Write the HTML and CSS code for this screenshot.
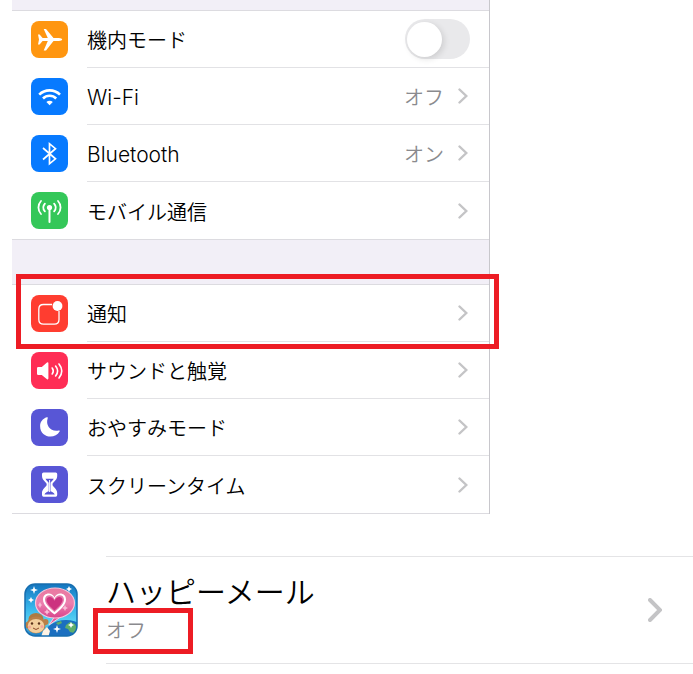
FILE: index.html
```html
<!DOCTYPE html>
<html lang="ja">
<head>
    <meta charset="UTF-8">
    <meta name="viewport" content="width=device-width, initial-scale=1.0">
    <title>設定</title>
    <link rel="stylesheet" href="styles.css">
</head>
<body>

    <!-- Settings list -->
    <div class="settings">
        <ul class="group">
            <li class="row">
                <svg class="icon orange" viewBox="0 0 37 37">
                    <path fill="#fff" d="M7 13.500h1.600l3 3.600h5.200L12.700 8h2.300l7.500 9.100h5.300c2 0 3.400.8 3.400 1.500s-1.400 1.500-3.400 1.500h-5.300L15 29.400h-2.300l4.100-9.300h-5.200l-3 3.500H7l1-5z"/>
                </svg>
                <div class="line">
                    <label class="name" for="airplane">機内モード</label>
                    <input class="toggle" type="checkbox" id="airplane">
                </div>
            </li>
            <li class="row">
                <svg class="icon blue" viewBox="0 0 37 37">
                    <g fill="none" stroke="#fff" stroke-width="2.600">
                        <path d="M8.200 16.600c5.800-5.700 15-5.700 20.800 0"/>
                        <path d="M12 20.500c3.600-3.600 9.600-3.600 13.200 0"/>
                    </g>
                    <path fill="#fff" d="M18.600 27.300l-3.200-3.300c1.800-1.700 4.600-1.700 6.400 0z"/>
                </svg>
                <a class="line" href="#">
                    <span class="name latin">Wi-Fi</span>
                    <span class="value">オフ</span>
                    <svg class="chevron" viewBox="0 0 10 16"><path d="M1.500 1.500L8.300 8l-6.800 6.500"/></svg>
                </a>
            </li>
            <li class="row">
                <svg class="icon blue" viewBox="0 0 37 37">
                    <path fill="none" stroke="#fff" stroke-width="1.700" d="M12 13l12.500 10.800-6 5V8.700l6 5L12 24.500"/>
                </svg>
                <a class="line" href="#">
                    <span class="name latin">Bluetooth</span>
                    <span class="value">オン</span>
                    <svg class="chevron" viewBox="0 0 10 16"><path d="M1.500 1.500L8.300 8l-6.800 6.500"/></svg>
                </a>
            </li>
            <li class="row">
                <svg class="icon green" viewBox="0 0 37 37">
                    <g fill="none" stroke="#fff" stroke-width="1.800" stroke-linecap="round">
                        <path d="M18.500 16v14" stroke-width="2"/>
                        <path d="M13.900 11.600c-2 2.300-2 5.500 0 7.800M23.100 11.600c2 2.300 2 5.500 0 7.800"/>
                        <path d="M10 9c-3.400 3.700-3.400 9.300 0 13M27 9c3.400 3.700 3.400 9.300 0 13"/>
                    </g>
                    <circle cx="18.500" cy="15.500" r="2.600" fill="#fff"/>
                </svg>
                <a class="line" href="#">
                    <span class="name">モバイル通信</span>
                    <svg class="chevron" viewBox="0 0 10 16"><path d="M1.500 1.500L8.300 8l-6.800 6.500"/></svg>
                </a>
            </li>
        </ul>

        <ul class="group">
            <li class="row marked">
                <svg class="icon red" viewBox="0 0 37 37">
                    <path fill="none" stroke="#fff" stroke-width="1.300" d="M21 9.500h-8.500c-3.200 0-4.700 1.500-4.700 4.700v10.300c0 3.200 1.500 4.700 4.700 4.700h10.800c3.200 0 4.700-1.500 4.700-4.700V16"/>
                    <circle cx="26.500" cy="11" r="4.900" fill="#fff"/>
                </svg>
                <a class="line" href="#">
                    <span class="name">通知</span>
                    <svg class="chevron" viewBox="0 0 10 16"><path d="M1.500 1.500L8.300 8l-6.800 6.500"/></svg>
                </a>
            </li>
            <li class="row">
                <svg class="icon pink" viewBox="0 0 37 37">
                    <path fill="#fff" d="M7.200 15h3.600l5.200-4.400q1.400-.8 1.400.9v14.800q0 1.700-1.400.9L10.800 23H7.200q-1.200 0-1.200-1.200v-5.600q0-1.200 1.200-1.200z"/>
                    <g fill="none" stroke="#fff" stroke-width="1.600" stroke-linecap="round">
                        <path d="M21.200 16c1.400 1.900 1.400 4.100 0 6M24.600 14c2.500 3.100 2.500 6.900 0 10M28 12c3.500 4.400 3.500 9.600 0 14"/>
                    </g>
                </svg>
                <a class="line" href="#">
                    <span class="name">サウンドと触覚</span>
                    <svg class="chevron" viewBox="0 0 10 16"><path d="M1.500 1.500L8.300 8l-6.800 6.500"/></svg>
                </a>
            </li>
            <li class="row">
                <svg class="icon purple" viewBox="0 0 37 37">
                    <path fill="#fff" d="M15.800 8.300c.7-.3 1.200.2.900.9-2.500 7.300 3.200 14 11 12.300.9-.2 1.300.3.900 1-4.500 8.200-19.500 6.500-19.500-5.500 0-4 2.500-7.300 6.700-8.700z"/>
                </svg>
                <a class="line" href="#">
                    <span class="name">おやすみモード</span>
                    <svg class="chevron" viewBox="0 0 10 16"><path d="M1.500 1.500L8.300 8l-6.800 6.500"/></svg>
                </a>
            </li>
            <li class="row">
                <svg class="icon purple" viewBox="0 0 37 37">
                    <path fill="#fff" d="M12.500 6.500h12.200q1.500 0 1.500 1.500v2c0 4.500-4.700 6-4.700 8.500s4.700 4 4.700 8.500v2q0 1.700-1.500 1.700H12.500q-1.500 0-1.500-1.700v-2c0-4.500 4.700-6 4.700-8.500s-4.700-4-4.700-8.500V8q0-1.500 1.500-1.500z"/>
                    <path fill="#5856d6" d="M14.500 12.700h8.200c-.8 1.600-2.600 3-3.200 4v8.600c1.800.8 3.500 1.300 4.200 3.200H13.500c.7-1.900 2.400-2.400 4.200-3.200v-8.600c-.6-1-2.400-2.400-3.200-4z"/>
                    <path stroke="#fff" stroke-width="1" d="M18.600 14v12"/>
                </svg>
                <a class="line" href="#">
                    <span class="name">スクリーンタイム</span>
                    <svg class="chevron" viewBox="0 0 10 16"><path d="M1.500 1.500L8.300 8l-6.800 6.500"/></svg>
                </a>
            </li>
        </ul>
    </div>

    <!-- App notification row -->
    <div class="app">
        <svg class="app-icon" viewBox="0 0 54 54">
            <defs>
                <linearGradient id="sky" x1="0" y1="0" x2="0" y2="1">
                    <stop offset="0" stop-color="#1272bd"/>
                    <stop offset=".45" stop-color="#36b4ea"/>
                    <stop offset=".75" stop-color="#5cd6f4"/>
                    <stop offset="1" stop-color="#1670bd"/>
                </linearGradient>
                <linearGradient id="bubble" x1="0" y1="0" x2="0" y2="1">
                    <stop offset="0" stop-color="#e9799f"/>
                    <stop offset=".5" stop-color="#ec7fae"/>
                    <stop offset="1" stop-color="#d8458c"/>
                </linearGradient>
                <clipPath id="tile"><rect x="1" y="1" width="52" height="52" rx="10"/></clipPath>
            </defs>
            <g clip-path="url(#tile)">
                <rect width="54" height="54" fill="url(#sky)"/>
                <ellipse cx="42" cy="53" rx="22" ry="16" fill="#1b6fc0"/>
                <path fill="#5fae6c" d="M42 42l4-3 5 2 2 5-3 4-4-1-2-3-3-1zM32 40l5-2 1 2-4 2z"/>
                <path fill="#e35b9a" stroke="#f7d3e3" d="M31 33l-6 9 13-9z"/>
                <ellipse cx="31" cy="20" rx="19.500" ry="15" fill="url(#bubble)" stroke="#f9c5da" stroke-width="1.200"/>
                <path fill="#fff" d="M30.500 31.500C24 26.500 19 21.500 19 16.500c0-7 9-8 11.500-2 2.500-6 11.500-5 11.500 2 0 5-5 10-11.500 15z"/>
                <path fill="#e67aaa" d="M30.500 29C25 24.500 21 20.500 21 16.500c0-5 7.500-6 9.500 0 2-6 9.500-5 9.500 0 0 4-4 8-9.500 12.500z"/>
                <path fill="#cc327f" d="M30.500 27.500C26 23.500 22.500 20 22.500 17c0-4 6-4.500 8 .8 2-5.300 8-4.800 8-.8 0 3-3.500 6.500-8 10.500z"/>
                <ellipse cx="12" cy="36" rx="7.500" ry="6" fill="#ad7a42"/>
                <circle cx="4" cy="42" r="3.200" fill="#b98049"/>
                <circle cx="21.500" cy="39" r="3" fill="#b98049"/>
                <ellipse cx="12" cy="42" rx="9.500" ry="8.500" fill="#b98049"/>
                <ellipse cx="12" cy="43" rx="8.300" ry="7" fill="#f3cf9d"/>
                <path fill="#fff3e4" d="M17 54l2-6 4-4 3 4-2 7z"/>
                <circle cx="8" cy="40.500" r="1.200" fill="#5a321a"/>
                <circle cx="15" cy="40.500" r="1.200" fill="#5a321a"/>
                <circle cx="5.500" cy="44" r="1.500" fill="#f5a29e"/>
                <circle cx="18" cy="43.500" r="1.500" fill="#f5a29e"/>
                <path fill="none" stroke="#8f4c2d" d="M9 45q3 3 6 0"/>
                <path fill="#fff" d="M10 3l1 3 3 1-3 1-1 3-1-3-3-1 3-1zM45 3l1 2 2 1-2 1-1 2-1-2-2-1 2-1zM33 42l1 3 3 1-3 1-1 3-1-3-3-1 3-1zM47 39l1 2 2 1-2 1-1 2-1-2-2-1 2-1zM7 14l1 2 2 1-2 1-1 2-1-2-2-1 2-1z"/>
                <path fill="#f9bcd6" d="M41 22l1 2 2 1-2 1-1 2-1-2-2-1 2-1zM23 26l1 2 2 1-2 1-1 2-1-2-2-1 2-1zM16 19l1 2 1 1-1 1-1 2-1-2-1-1 1-1z"/>
            </g>
            <rect x="1" y="1" width="52" height="52" rx="10" fill="none" stroke="#176eaf" stroke-width="1.500"/>
        </svg>
        <a class="app-line" href="#">
            <span class="app-text">
                <span class="app-name">ハッピーメール</span>
                <span class="app-state">オフ</span>
            </span>
            <svg class="chevron chevron-large" viewBox="0 0 14 24"><path d="M2 2l10 10L2 22"/></svg>
        </a>
    </div>

</body>
</html>
```
FILE: styles.css
```css
/* General Styles */
*,
*::before,
*::after {
    box-sizing: border-box;
}

body {
    font-family: Inter, "Noto Sans CJK JP", sans-serif;
    font-size: 20px;
    font-weight: 350;
    line-height: 28px;
    background: #fff;
    color: #000;
    margin: 0;
}

a {
    color: inherit;
    text-decoration: none;
}

/* Settings list */
.settings {
    max-width: 478px;
    margin-left: 12px;
    padding-top: 10px;
    background: #f2eff7;
    border-right: 1px solid #c8c7cc;
}

.group {
    list-style: none;
    margin: 0;
    padding: 0;
    background: #fff;
    border-top: 1px solid #dcdbe0;
    border-bottom: 1px solid #dcdbe0;
}

.group + .group {
    margin-top: 44px;
}

.row {
    position: relative;
    display: flex;
    align-items: center;
    gap: 19px;
    height: 57px;
    padding-left: 19px;
}

.line {
    display: flex;
    flex: 1;
    align-items: center;
    height: 57px;
    padding-right: 20px;
    border-bottom: 1px solid #e2e2e5;
}

.row:last-child .line {
    border-bottom: none;
}

.name,
.value {
    padding-top: 4px;
}

.name {
    flex: 1;
}

.latin {
    font-size: 21px;
}

.value {
    color: #8a8a8e;
    margin-right: 14px;
}

/* Icons */
.icon {
    flex: none;
    width: 37px;
    height: 37px;
    border-radius: 8px;
}

.orange { background: #ff9610; }
.blue { background: #077aff; }
.green { background: #34c759; }
.red { background: #ff3d30; }
.pink { background: #ff2d55; }
.purple { background: #5856d6; }

.chevron {
    flex: none;
    width: 10px;
    height: 16px;
    fill: none;
    stroke: #c4c4c6;
    stroke-width: 2.4;
    stroke-linecap: round;
}

.line .chevron {
    margin-right: 1px;
}

/* Switch */
.toggle {
    appearance: none;
    display: flex;
    align-items: center;
    width: 65px;
    height: 40px;
    margin: 0 -1px 0 0;
    padding: 2px;
    border-radius: 20px;
    background: #e9e9eb;
}

.toggle::before {
    content: "";
    width: 35px;
    height: 35px;
    border-radius: 50%;
    background: #fff;
    box-shadow: 2px 2px 6px rgba(0, 0, 0, 0.12);
}

.toggle:checked {
    justify-content: flex-end;
    background: #34c759;
}

/* Red frames */
.marked::after,
.app-state::after {
    content: "";
    position: absolute;
    border: 5px solid #ed1c24;
    pointer-events: none;
}

.marked::after {
    inset: -11px -10px -7px 4px;
    z-index: 1;
}

/* App row */
.app {
    display: flex;
    align-items: center;
    gap: 28px;
    margin-top: 42px;
    padding-left: 24px;
}

.app-icon {
    flex: none;
    width: 54px;
    height: 54px;
}

.app-line {
    display: flex;
    flex: 1;
    align-items: center;
    height: 108px;
    padding-right: 31px;
    border-top: 1px solid #e4e4e6;
    border-bottom: 1px solid #e4e4e6;
}

.app-text {
    flex: 1;
}

.app-name {
    display: block;
    font-size: 30px;
    line-height: 42px;
}

.app-state {
    position: relative;
    display: inline-block;
    color: #8a8a8e;
    line-height: 36px;
}

.app-state::after {
    top: -5px;
    left: -13px;
    width: 100px;
    height: 46px;
}

.chevron-large {
    width: 14px;
    height: 24px;
    stroke-width: 4;
}
```
